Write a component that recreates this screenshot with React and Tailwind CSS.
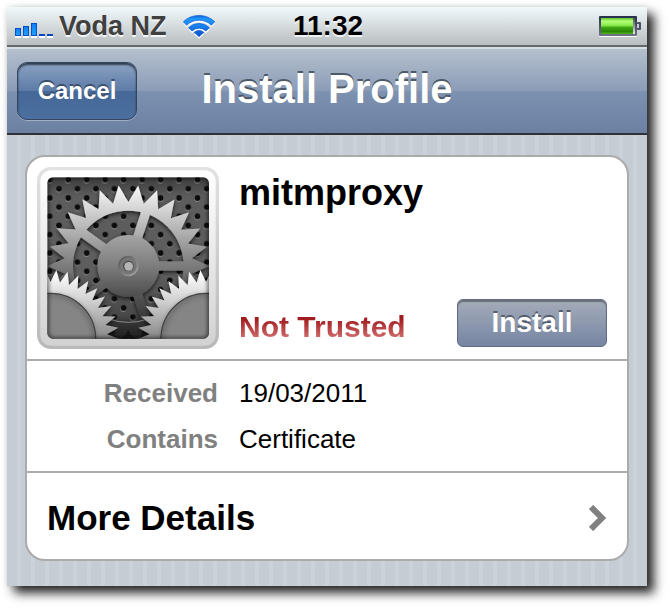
import { useId } from 'react';

// Builds a closed path for a gear outline with pointed teeth.
// offset is the angle (degrees, clockwise from 12 o'clock) of the first tooth.
function gearPath(cx, cy, tip, valley, teeth, offset) {
  const points = [];
  const step = 360 / teeth;
  for (let i = 0; i < teeth; i++) {
    [
      [tip, offset + i * step],
      [valley, offset + (i + 0.5) * step],
    ].forEach(([r, deg]) => {
      const a = (deg * Math.PI) / 180;
      points.push(`${(cx + r * Math.sin(a)).toFixed(1)} ${(cy - r * Math.cos(a)).toFixed(1)}`);
    });
  }
  return `M${points.join('L')}Z`;
}

function circlePath(cx, cy, r) {
  return `M${cx - r} ${cy}a${r} ${r} 0 1 0 ${2 * r} 0a${r} ${r} 0 1 0 ${-2 * r} 0Z`;
}

const SPOKES = [0, 72, 144, 216, 288];

function SignalIcon() {
  return (
    <svg width="38" height="15" viewBox="0 0 38 15" aria-label="Signal strength" role="img">
      <defs>
        <linearGradient id="bar" x1="0" y1="0" x2="0" y2="1">
          <stop offset="0" stopColor="#0d7cf5" />
          <stop offset="1" stopColor="#22a4ff" />
        </linearGradient>
      </defs>
      <path d="M0 13h6v2H0zM8 13h6v2H8zM16 13h6v2h-6zM24 13h6v2h-6zM32 13h6v2h-6z" fill="#fff" />
      <g fill="url(#bar)" stroke="#0a4fc4" strokeWidth="1">
        <rect x="0.5" y="5.5" width="5" height="7" />
        <rect x="8.5" y="3.5" width="5" height="9" />
        <rect x="16.5" y="0.5" width="5" height="12" />
      </g>
      <path d="M24 11h6v2h-6zM32 11h6v2h-6z" fill="#0c45bd" />
    </svg>
  );
}

function WifiIcon() {
  const arcs = (
    <>
      <path d="M1 26A68 68 0 0 1 95 26L85 37A52 52 0 0 0 11 37Z" />
      <path d="M17 44A44 44 0 0 1 79 44L69 54A30 30 0 0 0 27 54Z" />
      <path d="M34 58A20 20 0 0 1 62 58L48 71Z" />
    </>
  );
  return (
    <svg width="32" height="26" viewBox="0 0 96 78" aria-label="Wi-Fi" role="img">
      <defs>
        <linearGradient id="wifi" gradientUnits="userSpaceOnUse" x1="0" y1="4" x2="0" y2="71">
          <stop offset="0" stopColor="#0b49c0" />
          <stop offset="0.2" stopColor="#1f98fb" />
          <stop offset="0.5" stopColor="#1583f0" />
          <stop offset="1" stopColor="#0b4fd0" />
        </linearGradient>
      </defs>
      <g fill="#fff" transform="translate(0 6)">{arcs}</g>
      <g fill="url(#wifi)" stroke="#0b55cc" strokeWidth="2">{arcs}</g>
    </svg>
  );
}

function BatteryIcon() {
  return (
    <svg width="42" height="22" viewBox="0 0 42 22" aria-label="Battery" role="img">
      <defs>
        <linearGradient id="charge" x1="0" y1="0" x2="0" y2="1">
          <stop offset="0" stopColor="#5fc32b" />
          <stop offset="0.2" stopColor="#b3ff79" />
          <stop offset="0.45" stopColor="#8bec4b" />
          <stop offset="0.6" stopColor="#3ea612" />
          <stop offset="0.85" stopColor="#2a8505" />
          <stop offset="1" stopColor="#52b522" />
        </linearGradient>
        <linearGradient id="case" x1="0" y1="0" x2="0" y2="1">
          <stop offset="0" stopColor="#262f4c" />
          <stop offset="1" stopColor="#70748a" />
        </linearGradient>
        <linearGradient id="cell" x1="0" y1="0" x2="0" y2="1">
          <stop offset="0" stopColor="#4a4a52" />
          <stop offset="1" stopColor="#e8e8ea" />
        </linearGradient>
      </defs>
      <rect x="0" y="19" width="38" height="2" rx="1" fill="#fff" />
      <rect x="0" y="0" width="38" height="20" rx="1" fill="url(#case)" />
      <rect x="2" y="2" width="34" height="16" fill="url(#cell)" />
      <rect x="2" y="2" width="32" height="16" fill="url(#charge)" />
      <rect x="38" y="6" width="4" height="8" rx="1" fill="#4b5068" />
      <rect x="38" y="8" width="2" height="4" fill="#c5c8cc" />
    </svg>
  );
}

function SettingsIcon() {
  const id = useId();
  const ref = (name) => `url(#${id}${name})`;
  const ring = gearPath(324, 347, 243, 192, 26, 7) + circlePath(324, 347, 166);

  return (
    <svg className="size-[182px] shrink-0" viewBox="50 50 546 546" aria-hidden="true">
      <defs>
        <linearGradient id={`${id}frame`} x1="0" y1="0" x2="0" y2="1">
          <stop offset="0" stopColor="#e2e2e2" />
          <stop offset="1" stopColor="#b9b9b9" />
        </linearGradient>
        <linearGradient id={`${id}bezel`} x1="0" y1="0" x2="0" y2="1">
          <stop offset="0" stopColor="#ffffff" />
          <stop offset="1" stopColor="#d2d2d2" />
        </linearGradient>
        <linearGradient id={`${id}plate`} x1="0" y1="0" x2="0" y2="1">
          <stop offset="0" stopColor="#3c3c3c" />
          <stop offset="0.12" stopColor="#5c5c5c" />
          <stop offset="0.6" stopColor="#5e5e5e" />
          <stop offset="0.85" stopColor="#484848" />
          <stop offset="1" stopColor="#1c1c1c" />
        </linearGradient>
        <linearGradient id={`${id}steel`} gradientUnits="userSpaceOnUse" x1="0" y1="105" x2="0" y2="560">
          <stop offset="0" stopColor="#fafafa" />
          <stop offset="0.2" stopColor="#cacaca" />
          <stop offset="0.5" stopColor="#828282" />
          <stop offset="0.75" stopColor="#505050" />
          <stop offset="1" stopColor="#222222" />
        </linearGradient>
        <linearGradient id={`${id}hub`} x1="0" y1="0" x2="0" y2="1">
          <stop offset="0" stopColor="#a4a4a4" />
          <stop offset="0.5" stopColor="#7d7d7d" />
          <stop offset="1" stopColor="#4c4c4c" />
        </linearGradient>
        <linearGradient id={`${id}cog`} gradientUnits="userSpaceOnUse" x1="0" y1="365" x2="0" y2="566">
          <stop offset="0" stopColor="#ffffff" />
          <stop offset="0.4" stopColor="#d4d4d4" />
          <stop offset="1" stopColor="#868686" />
        </linearGradient>
        <linearGradient id={`${id}axle`} x1="0" y1="0" x2="1" y2="1">
          <stop offset="0" stopColor="#4f4f4f" />
          <stop offset="1" stopColor="#aaaaaa" />
        </linearGradient>
        <pattern id={`${id}holes`} x="116" y="88" width="55.4" height="55" patternUnits="userSpaceOnUse">
          <g fill="#8c8c8c">
            <circle cx="27" cy="3" r="8.5" />
            <circle cx="27" cy="58" r="8.5" />
            <circle cx="-0.7" cy="30.5" r="8.5" />
            <circle cx="54.7" cy="30.5" r="8.5" />
          </g>
          <g fill="#0c0c0c">
            <circle cx="27.7" cy="0" r="8.5" />
            <circle cx="27.7" cy="55" r="8.5" />
            <circle cx="0" cy="27.5" r="8.5" />
            <circle cx="55.4" cy="27.5" r="8.5" />
          </g>
        </pattern>
        <filter id={`${id}shade`} x="-10%" y="-10%" width="120%" height="120%">
          <feDropShadow dx="0" dy="5" stdDeviation="6" floodColor="#000" floodOpacity="0.75" />
        </filter>
        <filter id={`${id}soft`} x="-10%" y="-10%" width="120%" height="120%">
          <feGaussianBlur stdDeviation="6" />
        </filter>
        <clipPath id={`${id}clip`}>
          <rect x="81" y="81" width="485" height="484" rx="18" />
        </clipPath>
      </defs>

      <rect x="50" y="50" width="546" height="546" rx="42" fill={ref('frame')} />
      <rect x="60" y="60" width="526" height="526" rx="33" fill={ref('bezel')} />

      <g clipPath={ref('clip')}>
        <rect x="81" y="81" width="485" height="485" fill={ref('plate')} />
        <rect x="81" y="81" width="485" height="430" fill={ref('holes')} />

        <g filter={ref('shade')}>
          <path d={ring} fill={ref('steel')} fillRule="evenodd" />
          <g fill={ref('steel')}>
            {SPOKES.map((deg) => {
              const a = (deg * Math.PI) / 180;
              const [c, s] = [Math.cos(a), Math.sin(a)];
              const at = (u, v) => `${(324 + u * c - v * s).toFixed(1)} ${(347 + u * s + v * c).toFixed(1)}`;
              return <path key={deg} d={`M${at(80, -14)}L${at(172, -14)}L${at(172, 14)}L${at(80, 14)}Z`} />;
            })}
          </g>
          <circle cx="324" cy="347" r="93" fill={ref('hub')} />
        </g>
        <path d="M270 508Q324 524 378 508" fill="none" stroke="#8c8c8c" strokeWidth="3" />
        <path d="M324 545L346 566H302Z" fill="#161616" />

        <circle cx="324" cy="347" r="31" fill={ref('axle')} />
        <circle cx="324" cy="347" r="25" fill="#757575" />
        <circle cx="324" cy="347" r="16" fill="#4b4b4b" />
        <circle cx="325" cy="348" r="13" fill="#b5b5b5" />

        {[90, 558].map((cx) => (
          <g key={cx}>
            <path
              d={gearPath(cx, 565, 207, 170, 38, cx < 324 ? 5 : -5)}
              fill={ref('cog')}
              filter={ref('shade')}
            />
            <circle cx={cx} cy="565" r="136" fill="#858585" stroke="#454545" strokeWidth="4" />
            <circle cx={cx} cy="565" r="131" fill="none" stroke="#333" strokeOpacity="0.4" strokeWidth="8" filter={ref('soft')} />
          </g>
        ))}
        <rect
          x="79" y="77" width="489" height="491" rx="20"
          fill="none" stroke="#000" strokeOpacity="0.75" strokeWidth="10"
          filter={ref('soft')}
        />
      </g>
    </svg>
  );
}

function StatusBar() {
  return (
    <div className="grid h-10 grid-cols-[1fr_auto_1fr] items-center border-b-2 border-[#66696c] bg-linear-to-b from-[#f2f9fc] to-[#b9bfc0] pr-1.5 pl-2 font-bold">
      <div className="flex items-center">
        <div className="pt-2">
          <SignalIcon />
        </div>
        <span className="ml-1.5 text-[27px] leading-9 text-[#404040] [text-shadow:0_2px_0_#f3f6f7]">Voda NZ</span>
        <div className="ml-4">
          <WifiIcon />
        </div>
      </div>
      <time className="text-[28px] leading-9 text-black [text-shadow:0_2px_0_#eef2f3]">11:32</time>
      <div className="justify-self-end pt-0.5">
        <BatteryIcon />
      </div>
    </div>
  );
}

function NavBar() {
  return (
    <header className="grid h-[88px] grid-cols-[1fr_auto_1fr] items-center border-t-2 border-b-2 border-t-[#d5dce3] border-b-[#2c3238] bg-[linear-gradient(#b5c0cd,#8b9cb7_50%,#7d91b1_50%,#6c81a2)] px-2.5">
      <button
        type="button"
        className="h-[58px] w-[120px] justify-self-start rounded-[10px] border border-[#35455f] bg-[linear-gradient(#8ba2c2,#5c7ba7_50%,#456899_50%,#4b6f9f)] text-2xl font-bold text-white [text-shadow:0_-2px_0_#3c4f6c] shadow-[inset_0_2px_2px_#303d52,0_1px_0_#a0aec2]"
      >
        Cancel
      </button>
      <h1 className="pb-1 text-[40px] leading-12 font-bold text-white [text-shadow:0_-2px_0_#4d5966]">
        Install Profile
      </h1>
    </header>
  );
}

const details = [
  { label: 'Received', value: '19/03/2011' },
  { label: 'Contains', value: 'Certificate' },
];

export default function App() {
  return (
    <div className="bg-white pt-[7px] pr-[23px] pb-[23px] pl-[7px] font-['Liberation_Sans',Arial,sans-serif]">
      <div className="bg-[repeating-linear-gradient(90deg,#c5ccd4_0px,#c5ccd4_10px,#cbd2d9_10px,#cbd2d9_14px)] shadow-[7px_7px_10px_rgba(0,0,0,0.85),0_0_6px_rgba(0,0,0,0.12)]">
        <StatusBar />
        <NavBar />
        <main className="px-[18px] pt-5 pb-[25px]">
          <div className="overflow-hidden rounded-[20px] border-2 border-[#ababab] bg-white">
            <section className="flex gap-5 border-b-2 border-[#ababab] p-2.5">
              <SettingsIcon />
              <div className="flex flex-1 flex-col justify-between pr-2.5 pb-0.5">
                <h2 className="pt-1.5 text-[36px] leading-10 font-bold text-black">mitmproxy</h2>
                <div className="flex items-end justify-between">
                  <span className="bg-[linear-gradient(#a01c1f_30%,#d27070_80%)] bg-clip-text text-[30px] leading-10 font-bold text-transparent">
                    Not Trusted
                  </span>
                  <button
                    type="button"
                    className="h-12 w-[150px] rounded-md border border-[#636c84] bg-linear-to-b from-[#a5acb9] to-[#7685a3] text-[28px] leading-9 font-bold text-white [text-shadow:0_-2px_0_#555e6d] shadow-[inset_0_2px_1px_#6b7078]"
                  >
                    Install
                  </button>
                </div>
              </div>
            </section>

            <dl className="border-b-2 border-[#ababab] py-[9px] text-[26px] leading-[46px]">
              {details.map(({ label, value }) => (
                <div key={label} className="grid grid-cols-[191px_1fr] gap-[21px]">
                  <dt className="text-right font-bold text-[#808080]">{label}</dt>
                  <dd className="text-black">{value}</dd>
                </div>
              ))}
            </dl>

            <button type="button" className="flex h-[86px] w-full items-center justify-between px-5 pt-1 text-left">
              <span className="text-[35px] leading-10 font-bold text-black">More Details</span>
              <svg width="18" height="26" viewBox="0 0 18 26" fill="none" aria-hidden="true">
                <path d="M2 2L13 13L2 24" stroke="#808080" strokeWidth="6" />
              </svg>
            </button>
          </div>
        </main>
      </div>
    </div>
  );
}
